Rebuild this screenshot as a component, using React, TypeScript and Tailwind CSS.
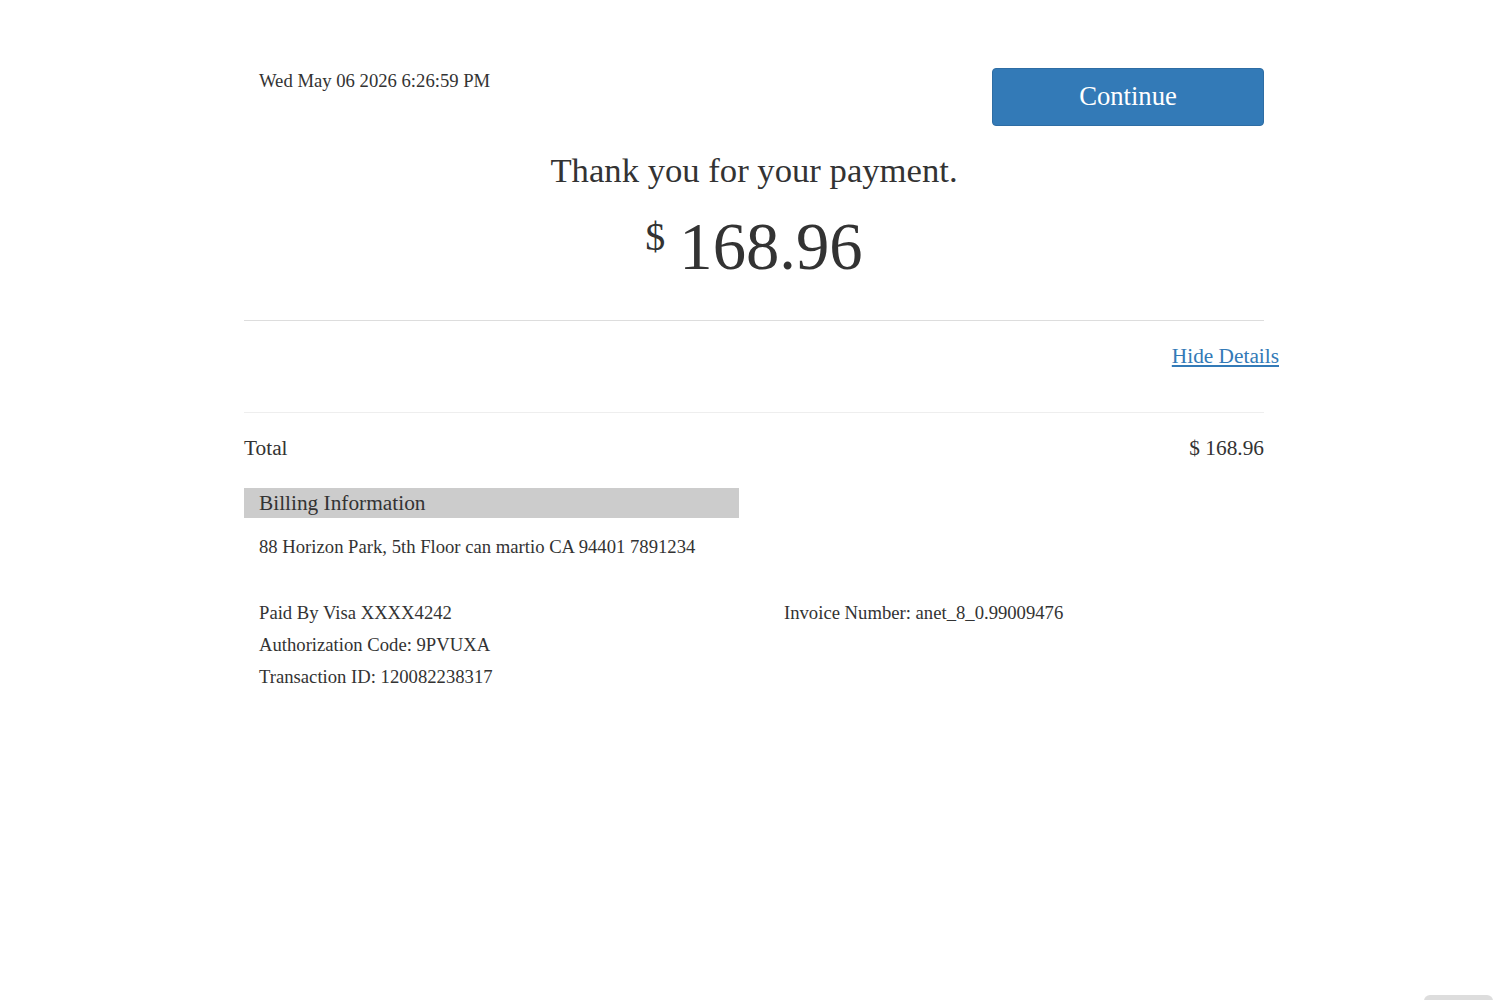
export default function App() {
  return (
    <div className="relative min-h-[1000px] bg-white text-[#333] font-['Liberation_Serif','Times_New_Roman',serif]">
      <div className="mx-auto w-[1020px] pt-[68px]">
        {/* ===== HEADER ===== */}
        <div className="flex items-start justify-between">
          <div className="pl-[15px] pt-[1px] text-[18.67px] leading-[24px]">Wed May 06 2026 6:26:59 PM</div>
          <button className="h-[58px] w-[272px] rounded-[4px] border border-[#2e6da4] bg-[#337ab7] pb-[2px] text-[26.67px] text-white">
            Continue
          </button>
        </div>

        {/* ===== THANK YOU ===== */}
        <div className="mt-[23px] text-center text-[34.67px] leading-[42px]">Thank you for your payment.</div>
        <div className="mt-[23px] flex items-start justify-center">
          <span className="mt-[3px] mr-[14px] text-[40px] leading-[40px]">$</span>
          <span className="text-[66.67px] leading-[66px]">168.96</span>
        </div>

        <div className="mt-[40px] border-t border-[#ddd]" />

        {/* ===== DETAILS ===== */}
        <div className="flex justify-end pt-[22px] pb-[43px] -mr-[15px]">
          <a href="#" className="text-[21.33px] leading-[26px] text-[#337ab7] underline">
            Hide Details
          </a>
        </div>
        <div className="border-t border-[#eee]" />

        <div className="flex justify-between pt-[22px] text-[21.33px] leading-[26px]">
          <span>Total</span>
          <span>$ 168.96</span>
        </div>

        <div className="mt-[27px] grid grid-cols-2 gap-x-[30px]">
          <div>
            <div className="h-[30px] bg-[#ccc] pl-[15px] text-[21.33px] leading-[30px]">Billing Information</div>
            <div className="mt-[17px] pl-[15px] text-[18.67px] leading-[24px]">
              88 Horizon Park, 5th Floor can martio CA 94401 7891234
            </div>
          </div>
          <div />
        </div>

        <div className="mt-[38px] grid grid-cols-2 gap-x-[30px] text-[18.67px] leading-[32px]">
          <div className="pl-[15px]">
            <div>Paid By Visa XXXX4242</div>
            <div>Authorization Code: 9PVUXA</div>
            <div>Transaction ID: 120082238317</div>
          </div>
          <div className="pl-[15px]">
            <div>Invoice Number: anet_8_0.99009476</div>
          </div>
        </div>
      </div>

      {/* bottom-right badge */}
      <div className="absolute right-[15px] top-[995px] h-[12px] w-[69px] rounded-[6px] bg-[#ddd]" />
    </div>
  )
}
